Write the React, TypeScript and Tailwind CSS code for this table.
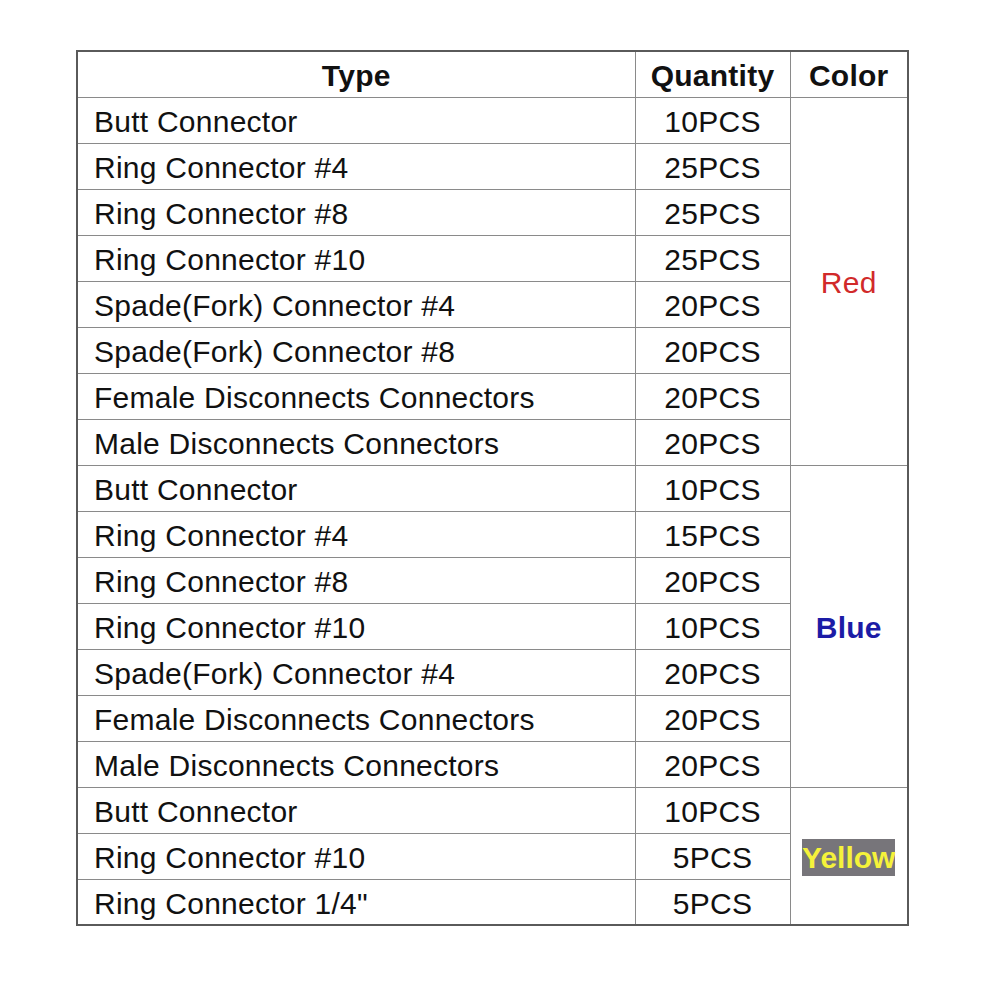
const groups = [
  {
    color: 'Red',
    rows: [
      ['Butt Connector', '10PCS'],
      ['Ring Connector #4', '25PCS'],
      ['Ring Connector #8', '25PCS'],
      ['Ring Connector #10', '25PCS'],
      ['Spade(Fork) Connector #4', '20PCS'],
      ['Spade(Fork) Connector #8', '20PCS'],
      ['Female Disconnects Connectors', '20PCS'],
      ['Male Disconnects Connectors', '20PCS'],
    ],
  },
  {
    color: 'Blue',
    rows: [
      ['Butt Connector', '10PCS'],
      ['Ring Connector #4', '15PCS'],
      ['Ring Connector #8', '20PCS'],
      ['Ring Connector #10', '10PCS'],
      ['Spade(Fork) Connector #4', '20PCS'],
      ['Female Disconnects Connectors', '20PCS'],
      ['Male Disconnects Connectors', '20PCS'],
    ],
  },
  {
    color: 'Yellow',
    rows: [
      ['Butt Connector', '10PCS'],
      ['Ring Connector #10', '5PCS'],
      ['Ring Connector 1/4"', '5PCS'],
    ],
  },
]

function ColorLabel({ color }: { color: string }) {
  if (color === 'Red') return <span className="text-[#d12a2a]">Red</span>
  if (color === 'Blue') return <span className="font-bold text-[#1c1ca6]">Blue</span>
  return <span className="bg-[#77757a] py-0.5 font-bold tracking-normal text-[#f5f23a]">Yellow</span>
}

export default function App() {
  return (
    <div className="min-h-[1000px] w-[1000px] bg-white pl-[76px] pt-[50px] font-['Liberation_Sans',Arial,sans-serif] text-[30px] leading-none tracking-[0.25px] text-[#111]">
      <table className="w-[831px] table-fixed border-collapse border-2 border-[#5a5a5a]">
        <colgroup>
          <col className="w-[558px]" />
          <col className="w-[155px]" />
          <col className="w-[118px]" />
        </colgroup>
        <thead>
          <tr className="h-[46px]">
            <th className="border border-[#8a8a8a] pt-1 text-center font-bold">Type</th>
            <th className="border border-[#8a8a8a] pt-1 text-center font-bold">Quantity</th>
            <th className="border border-[#8a8a8a] pt-1 text-center font-bold">Color</th>
          </tr>
        </thead>
        <tbody>
          {groups.map((g) =>
            g.rows.map(([type, qty], i) => (
              <tr key={g.color + i} className="h-[46px]">
                <td className="border border-[#8a8a8a] pl-4 pt-1">{type}</td>
                <td className="border border-[#8a8a8a] pt-1 text-center">{qty}</td>
                {i === 0 && (
                  <td rowSpan={g.rows.length} className="border border-[#8a8a8a] pt-1 text-center">
                    <ColorLabel color={g.color} />
                  </td>
                )}
              </tr>
            )),
          )}
        </tbody>
      </table>
    </div>
  )
}
